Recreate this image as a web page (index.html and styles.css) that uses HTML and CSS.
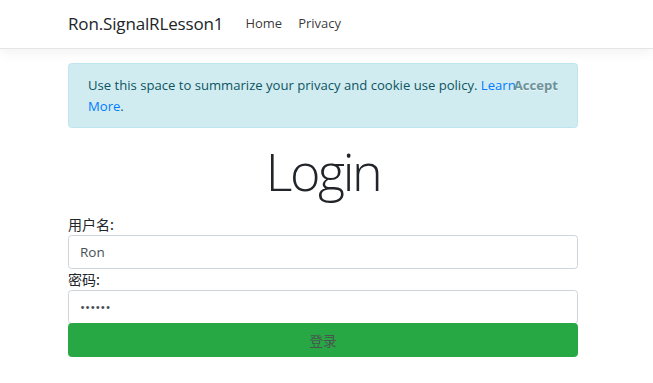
FILE: index.html
```html
<!DOCTYPE html>
<html lang="zh">
<head>
    <meta charset="UTF-8">
    <meta name="viewport" content="width=device-width, initial-scale=1.0">
    <title>Login - Ron.SignalRLesson1</title>
    <link rel="stylesheet" href="styles.css">
</head>
<body>
    <header>
        <nav class="navbar">
            <div class="container nav-inner">
                <a class="navbar-brand" href="#">Ron.SignalRLesson1</a>
                <ul class="navbar-nav">
                    <li><a class="nav-link" href="#">Home</a></li>
                    <li><a class="nav-link" href="#">Privacy</a></li>
                </ul>
            </div>
        </nav>
    </header>
    <div class="container">
        <div class="alert alert-info">
            Use this space to summarize your privacy and cookie use policy. <a href="#">Learn More</a>.
            <button type="button" class="accept-policy">Accept</button>
        </div>
        <main role="main">
            <h1 class="display-4">Login</h1>
            <form class="login-form">
                <label for="username">用户名:</label>
                <input type="text" id="username" class="form-control" value="Ron">
                <label for="password">密码:</label>
                <input type="password" id="password" class="form-control" value="123456">
                <button type="submit" class="form-control btn-login">登录</button>
            </form>
        </main>
    </div>
</body>
</html>
```

FILE: styles.css
```css
html {
    font-size: 14px;
}
body {
    margin: 0;
    font-family: "Open Sans", "Noto Sans CJK SC", sans-serif;
    font-size: 13.1px;
    line-height: 1.5;
    color: #212529;
    background: #fff;
}
a {
    color: #007bff;
    text-decoration: none;
}
.container {
    width: 510px;
    margin-left: 68px;
}
.navbar {
    background: #fff;
    border-bottom: 1px solid #e5e5e5;
    box-shadow: 0 .25rem .75rem rgba(0, 0, 0, .05);
    margin-bottom: 14px;
}
.nav-inner {
    display: flex;
    align-items: center;
    height: 48px;
}
.navbar-brand {
    font-size: 17px;
    color: #212529;
    margin-right: 14px;
    letter-spacing: -0.15px;
}
.navbar-nav {
    display: flex;
    list-style: none;
    margin: 0;
    padding: 0;
}
.nav-link {
    display: block;
    padding: 0 8px;
    color: rgba(0, 0, 0, .8);
    font-size: 13px;
}
.alert {
    position: relative;
    padding: 10.5px 56px 10.5px 19px;
    border: 1px solid #bee5eb;
    border-radius: 3.5px;
    background: #d1ecf1;
    color: #0c5460;
    margin-bottom: 14px;
    line-height: 21px;
}
.accept-policy {
    position: absolute;
    top: 0;
    right: 0;
    padding: 11px 19px;
    border: 0;
    background: transparent;
    font-family: inherit;
    font-size: 13.1px;
    line-height: 21px;
    font-weight: 700;
    color: #6f9299;
    text-shadow: 0 1px 0 rgba(255, 255, 255, .5);
    cursor: pointer;
}
.display-4 {
    font-size: 52px;
    font-weight: 300;
    line-height: 61px;
    letter-spacing: -2.4px;
    text-align: center;
    margin: -2px 0 13px;
}
.login-form {
    display: flex;
    flex-direction: column;
}
.login-form label {
    font-family: "Noto Sans CJK SC", sans-serif;
    font-size: 14px;
    line-height: 21px;
    height: 21px;
}
.form-control {
    box-sizing: border-box;
    height: 34px;
    padding: 5px 11px;
    font-family: inherit;
    font-size: 13.5px;
    color: #495057;
    background: #fff;
    border: 1px solid #ced4da;
    border-radius: 3.5px;
}
.btn-login {
    height: 34px;
    margin-top: -1px;
    background: #28a745;
    border-color: #28a745;
    color: #4a5550;
    font-family: "Noto Sans CJK SC", sans-serif;
}
```
